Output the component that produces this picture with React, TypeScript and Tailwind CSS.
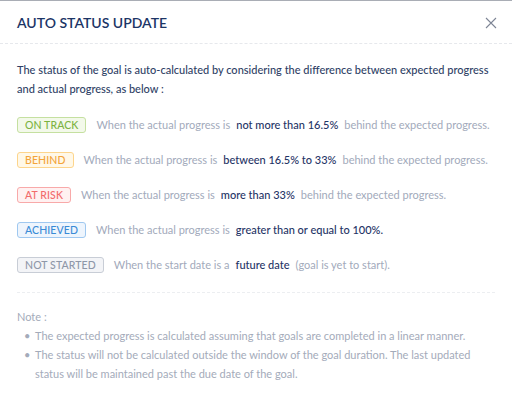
import React from "react";

type Row = {
  label: string;
  badge: string;
  lead: string;
  strong: string;
  tail?: string;
};

const ROWS: Row[] = [
  {
    label: "ON TRACK",
    badge: "text-[#7cb342] bg-[#f3f9ea] border-[#c5e0a0]",
    lead: "When the actual progress is",
    strong: "not more than 16.5%",
    tail: "behind the expected progress.",
  },
  {
    label: "BEHIND",
    badge: "text-[#f3a43a] bg-[#fff8e8] border-[#fdd58c]",
    lead: "When the actual progress is",
    strong: "between 16.5% to 33%",
    tail: "behind the expected progress.",
  },
  {
    label: "AT RISK",
    badge: "text-[#f26b6b] bg-[#fff1f1] border-[#f8a9a9]",
    lead: "When the actual progress is",
    strong: "more than 33%",
    tail: "behind the expected progress.",
  },
  {
    label: "ACHIEVED",
    badge: "text-[#3a8bd6] bg-[#eef5fd] border-[#9fc8f0]",
    lead: "When the actual progress is",
    strong: "greater than or equal to 100%.",
  },
  {
    label: "NOT STARTED",
    badge: "text-[#8e97a8] bg-[#f3f4f7] border-[#c8cdd6]",
    lead: "When the start date is a",
    strong: "future date",
    tail: "(goal is yet to start).",
  },
];

export default function App() {
  return (
    <div
      className="w-[512px] h-[408px] bg-white border-t border-[#a9adb5] overflow-hidden"
      style={{ fontFamily: "Lato, 'Noto Sans', sans-serif" }}
    >
      {/* Header */}
      <div className="flex items-center justify-between h-[43px] pl-[17px] pr-[15px] border-b border-dashed border-[#e6e8ec]">
        <h1 className="text-[14px] text-[#1c3566] font-semibold pt-[1px]">
          AUTO STATUS UPDATE
        </h1>
        <svg width="12" height="12" viewBox="0 0 12 12" className="mt-[1px]">
          <path d="M1 1L11 11M11 1L1 11" stroke="#7d8595" strokeWidth="1.1" />
        </svg>
      </div>

      <div className="px-[17px] pt-[16px]">
        <p className="text-[11px] leading-[19px] text-[#2f3f66] font-medium whitespace-nowrap">
          The status of the goal is auto-calculated by considering the difference between expected progress
          <br />
          and actual progress, as below :
        </p>

        <div className="flex flex-col gap-[19px] mt-[19px]">
          {ROWS.map((r) => (
            <div key={r.label} className="flex items-center h-[16px] text-[11px] whitespace-nowrap">
              <span
                className={`h-[16px] px-[7px] flex items-center rounded-[3px] border text-[10.5px] font-medium leading-none tracking-[0.1px] ${r.badge}`}
              >
                {r.label}
              </span>
              <span className="ml-[10px] text-[#a2aabb]">{r.lead}</span>
              <span className="ml-[6px] text-[#1f3466] font-medium">{r.strong}</span>
              {r.tail && <span className="ml-[6px] text-[#a2aabb]">{r.tail}</span>}
            </div>
          ))}
        </div>

        <div className="mt-[19px] border-t border-dashed border-[#eceef1]" />

        <div className="pt-[14px] text-[11px] leading-[19px] text-[#a4abba]">
          <p>Note :</p>
          <ul className="pl-[7px]">
            <li className="flex">
              <span className="w-[11px] shrink-0">•</span>
              <span>The expected progress is calculated assuming that goals are completed in a linear manner.</span>
            </li>
            <li className="flex">
              <span className="w-[11px] shrink-0">•</span>
              <span>
                The status will not be calculated outside the window of the goal duration. The last updated
                status will be maintained past the due date of the goal.
              </span>
            </li>
          </ul>
        </div>
      </div>
    </div>
  );
}
